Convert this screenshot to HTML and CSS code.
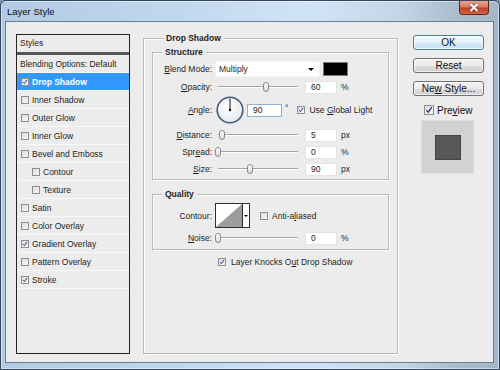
FILE: index.html
```html
<!DOCTYPE html>
<html lang="en">
<head>
    <meta charset="UTF-8">
    <title>Layer Style</title>
    <link rel="stylesheet" href="styles.css">
</head>
<body>
    <div class="window">
        <div class="titlebar">
            <span class="title">Layer Style</span>
            <span class="close">
                <svg width="12" height="9" viewBox="0 0 12 9"><path d="M2.5 1 L9.5 8 M9.5 1 L2.5 8" stroke="#fff" stroke-width="2" fill="none"/></svg>
            </span>
        </div>
        <div class="client">
            <div class="styles-panel">
                <div class="styles-head">Styles</div>
                <div class="style-row plain">Blending Options: Default</div>
                <div class="style-row selected"><span class="check on"><svg viewBox="0 0 8 8"><path d="M1.4 4.2 L3.2 6.2 L6.8 1.2" stroke="#21307a" stroke-width="1.3" fill="none"/></svg></span>Drop Shadow</div>
                <div class="style-row"><span class="check"></span>Inner Shadow</div>
                <div class="style-row"><span class="check"></span>Outer Glow</div>
                <div class="style-row"><span class="check"></span>Inner Glow</div>
                <div class="style-row"><span class="check"></span>Bevel and Emboss</div>
                <div class="style-row sub"><span class="check"></span>Contour</div>
                <div class="style-row sub"><span class="check"></span>Texture</div>
                <div class="style-row"><span class="check"></span>Satin</div>
                <div class="style-row"><span class="check"></span>Color Overlay</div>
                <div class="style-row"><span class="check on"><svg viewBox="0 0 8 8"><path d="M1.4 4.2 L3.2 6.2 L6.8 1.2" stroke="#21307a" stroke-width="1.3" fill="none"/></svg></span>Gradient Overlay</div>
                <div class="style-row"><span class="check"></span>Pattern Overlay</div>
                <div class="style-row"><span class="check on"><svg viewBox="0 0 8 8"><path d="M1.4 4.2 L3.2 6.2 L6.8 1.2" stroke="#21307a" stroke-width="1.3" fill="none"/></svg></span>Stroke</div>
            </div>

            <fieldset class="group main-group">
                <legend>Drop Shadow</legend>

                <fieldset class="group sub-group structure">
                    <legend>Structure</legend>
                    <div class="field-row blend-row">
                        <span class="field-label"><u>B</u>lend Mode:</span>
                        <div class="select"><span>Multiply</span><span class="arrow"></span></div>
                        <span class="swatch"></span>
                    </div>
                    <div class="field-row">
                        <span class="field-label"><u>O</u>pacity:</span>
                        <div class="slider"><div class="track"><span class="thumb" style="left: 60%"></span></div></div>
                        <span class="num">60</span>
                        <span class="unit">%</span>
                    </div>
                    <div class="field-row angle-row">
                        <span class="field-label"><u>A</u>ngle:</span>
                        <svg class="dial" width="28" height="28" viewBox="0 0 28 28">
                            <defs>
                                <radialGradient id="dialFill" cx="40%" cy="35%" r="70%">
                                    <stop offset="0" stop-color="#ffffff"/>
                                    <stop offset="1" stop-color="#e4e8ee"/>
                                </radialGradient>
                            </defs>
                            <circle cx="14" cy="14" r="12.8" fill="url(#dialFill)" stroke="#46587a" stroke-width="1.6"/>
                            <line x1="14" y1="14" x2="14" y2="2.5" stroke="#111" stroke-width="1"/>
                            <circle cx="14" cy="14" r="1.2" fill="#111"/>
                        </svg>
                        <span class="num angle-input">90</span>
                        <span class="degree">°</span>
                        <span class="check on global"><svg viewBox="0 0 8 8"><path d="M1.4 4.2 L3.2 6.2 L6.8 1.2" stroke="#21307a" stroke-width="1.3" fill="none"/></svg></span>
                        <span class="check-text">Use <u>G</u>lobal Light</span>
                    </div>
                    <div class="field-row distance-row">
                        <span class="field-label"><u>D</u>istance:</span>
                        <div class="slider"><div class="track"><span class="thumb" style="left: 5%"></span></div></div>
                        <span class="num">5</span>
                        <span class="unit">px</span>
                    </div>
                    <div class="field-row">
                        <span class="field-label">Spr<u>e</u>ad:</span>
                        <div class="slider"><div class="track"><span class="thumb" style="left: 0%"></span></div></div>
                        <span class="num">0</span>
                        <span class="unit">%</span>
                    </div>
                    <div class="field-row">
                        <span class="field-label"><u>S</u>ize:</span>
                        <div class="slider"><div class="track"><span class="thumb" style="left: 40%"></span></div></div>
                        <span class="num">90</span>
                        <span class="unit">px</span>
                    </div>
                </fieldset>

                <fieldset class="group sub-group quality">
                    <legend>Quality</legend>
                    <div class="field-row contour-row">
                        <span class="field-label">Contour:</span>
                        <div class="contour">
                            <svg width="26" height="23" viewBox="0 0 26 23"><polygon points="0,23 26,0 26,23" fill="#9c9c9c"/></svg>
                            <span class="contour-drop"><span class="arrow"></span></span>
                        </div>
                        <span class="check aa"></span>
                        <span class="check-text">Anti-a<u>l</u>iased</span>
                    </div>
                    <div class="field-row">
                        <span class="field-label"><u>N</u>oise:</span>
                        <div class="slider"><div class="track"><span class="thumb" style="left: 0%"></span></div></div>
                        <span class="num">0</span>
                        <span class="unit">%</span>
                    </div>
                </fieldset>

                <div class="knockout">
                    <span class="check on"><svg viewBox="0 0 8 8"><path d="M1.4 4.2 L3.2 6.2 L6.8 1.2" stroke="#21307a" stroke-width="1.3" fill="none"/></svg></span>
                    <span class="check-text">Layer Knocks O<u>u</u>t Drop Shadow</span>
                </div>
            </fieldset>

            <div class="buttons">
                <div class="btn default">OK</div>
                <div class="btn">Reset</div>
                <div class="btn">Ne<u>w</u> Style...</div>
                <div class="preview-row">
                    <span class="check on big"><svg viewBox="0 0 8 8"><path d="M1.4 4.2 L3.2 6.2 L6.8 1.2" stroke="#21307a" stroke-width="1.2" fill="none"/></svg></span>
                    <span>Pre<u>v</u>iew</span>
                </div>
                <div class="preview-box"><span class="preview-square"></span></div>
            </div>
        </div>
    </div>
</body>
</html>
```

FILE: styles.css
```css
* {
    box-sizing: border-box;
}
body {
    margin: 0;
    width: 500px;
    height: 370px;
    overflow: hidden;
    font-family: "Liberation Sans", Arial, sans-serif;
    font-size: 8.5px;
    color: #1e1e1e;
    background: #7f95a8;
}
u {
    text-decoration-thickness: 1px;
    text-underline-offset: 1px;
}

/* window frame */
.window {
    width: 500px;
    height: 370px;
    display: flex;
    flex-direction: column;
    border: 1px solid #34475a;
    border-radius: 6px 6px 0 0;
    padding: 0 5px 6px 4px;
    background: linear-gradient(90deg, #b3cae3 0%, #c1d7ee 35%, #cfe4f6 62%, #c3d6e8 80%, #a9bccd 92%, #a5b6c6 100%);
    box-shadow: inset 0 0 0 1px rgba(255, 255, 255, 0.45);
}
.titlebar {
    height: 20px;
    display: flex;
    justify-content: space-between;
    align-items: center;
}
.title {
    margin-left: 2px;
    font-size: 9.5px;
    color: #111;
}
.close {
    align-self: flex-start;
    width: 30px;
    height: 14px;
    margin-top: 0;
    margin-right: 5px;
    border: 1px solid #5b2b23;
    border-top: none;
    border-radius: 0 0 4px 4px;
    background: linear-gradient(#e8a491 0%, #d77c66 45%, #bf3f26 55%, #d5664a 100%);
    display: flex;
    align-items: center;
    justify-content: center;
}
.close svg {
    filter: drop-shadow(0 0 1px #5b2015);
}
.client {
    flex: 1;
    display: flex;
    border: 1px solid #6b7e91;
    background: #ececec;
    padding: 12px 9px 8px 10px;
}

/* checkboxes */
.check {
    flex: none;
    width: 8px;
    height: 8px;
    border: 1px solid #8e8f8f;
    background: linear-gradient(135deg, #dcdcdc, #f7f7f7);
    display: inline-flex;
}
.check svg {
    width: 100%;
    height: 100%;
}
.check.big {
    width: 10px;
    height: 10px;
}
.check-text {
    margin-left: 4px;
}

/* styles list */
.styles-panel {
    width: 114px;
    border: 1px solid #262626;
}
.styles-head {
    height: 20px;
    line-height: 17px;
    padding-left: 3px;
    border-bottom: 3px solid #565656;
}
.style-row {
    height: 18px;
    display: flex;
    align-items: center;
    padding-left: 4px;
    border-bottom: 1px solid #f8f8f8;
    gap: 3px;
}
.style-row.plain {
    padding-left: 3px;
}
.style-row.sub {
    padding-left: 15px;
}
.style-row.selected {
    background: #3399ff;
    color: #fff;
    font-weight: bold;
}

/* group boxes */
.group {
    margin: 0;
    padding: 0;
    min-width: 0;
    border: 1px solid #b8b8b8;
    box-shadow: inset 1px 1px 0 #fff, 1px 1px 0 #fff;
}
.group legend {
    font-weight: bold;
    line-height: 8px;
    padding: 0 3px;
    background: #ececec;
}
.main-group {
    width: 255px;
    margin-left: 13px;
    padding: 6px 8px 0 8px;
}
.main-group > legend {
    margin-left: 11px;
}
.sub-group > legend {
    margin-left: 9px;
}
.structure {
    padding: 5px 0 3px 0;
}
.quality {
    margin-top: 10px;
    padding: 5px 0 4px 0;
}

/* rows */
.field-row {
    display: flex;
    align-items: center;
    height: 14px;
    margin-top: 3px;
}
.field-label {
    width: 59px;
    margin-right: 3px;
    text-align: right;
    flex: none;
}
.blend-row {
    height: 16px;
    margin-top: 0;
}
.angle-row {
    height: 28px;
    margin-top: 2px;
}
.distance-row {
    margin-top: 4px;
}
.contour-row {
    height: 25px;
    margin-top: 0;
}
.select {
    width: 105px;
    height: 16px;
    background: #fff;
    border: 1px solid #f4f4f4;
    display: flex;
    align-items: center;
    justify-content: space-between;
    padding: 0 5px 0 3px;
}
.arrow {
    width: 0;
    height: 0;
    border-left: 3px solid transparent;
    border-right: 3px solid transparent;
    border-top: 3px solid #000;
}
.swatch {
    width: 25px;
    height: 14px;
    margin-left: 3px;
    background: #000;
    border: 1px solid #7a7a7a;
}
.slider {
    width: 84px;
    height: 14px;
    margin-left: 1px;
    padding: 0 2px;
    display: flex;
    align-items: center;
}
.track {
    position: relative;
    width: 100%;
    height: 2px;
    border-top: 1px solid #a3a3a3;
    border-bottom: 1px solid #fff;
}
.thumb {
    position: absolute;
    top: -5px;
    width: 6px;
    height: 10px;
    margin-left: -3px;
    border: 1px solid #8a8a8a;
    border-radius: 3px 3px 3px 3px;
    background: linear-gradient(#ffffff, #d9d9d9);
}
.num {
    width: 32px;
    height: 13px;
    margin-left: 5px;
    padding-left: 5px;
    line-height: 11px;
    background: #fff;
    border: 1px solid #e4e4e4;
}
.unit {
    margin-left: 4px;
}
.dial {
    margin-left: 1px;
    flex: none;
}
.angle-input {
    width: 35px;
    margin-left: 3px;
    border-color: #8fb2d8;
}
.degree {
    margin-left: 3px;
    align-self: flex-start;
    margin-top: 7px;
}
.check.global {
    margin-left: 9px;
}
.contour {
    width: 35px;
    height: 25px;
    display: flex;
    border: 1px solid #2e2e2e;
    background: #fff;
}
.contour svg {
    flex: none;
}
.contour-drop {
    flex: 1;
    border-left: 1px solid #2e2e2e;
    display: flex;
    align-items: center;
    justify-content: center;
}
.contour-drop .arrow {
    border-left-width: 2px;
    border-right-width: 2px;
    border-top-width: 2px;
}
.check.aa {
    margin-left: 10px;
}
.knockout {
    display: flex;
    align-items: center;
    height: 13px;
    margin-top: 5px;
    margin-left: 66px;
}
.knockout .check-text {
    margin-left: 5px;
}

/* buttons column */
.buttons {
    width: 71px;
    margin-left: 15px;
    display: flex;
    flex-direction: column;
    font-size: 10px;
    color: #111;
}
.btn {
    height: 15px;
    margin-top: 8px;
    border: 1px solid #707070;
    border-radius: 3px;
    text-align: center;
    line-height: 13px;
    background: linear-gradient(#f3f3f3 0%, #ebebeb 50%, #dddddd 51%, #d0d0d0 100%);
    box-shadow: inset 0 0 0 1px rgba(255, 255, 255, 0.7);
}
.btn.default {
    margin-top: 1px;
    border-color: #3c7fb1;
    background: linear-gradient(#f2f9fd 0%, #e6f3fb 50%, #d4ebf8 51%, #c6e2f4 100%);
}
.preview-row {
    display: flex;
    align-items: center;
    height: 10px;
    margin-top: 9px;
    padding-left: 11px;
    gap: 3px;
}
.preview-box {
    width: 53px;
    height: 54px;
    margin-top: 5px;
    margin-left: 8px;
    background: #d2d2d2;
    border: 1px solid #dedede;
    display: flex;
    align-items: center;
    justify-content: center;
}
.preview-square {
    width: 26px;
    height: 25px;
    background: #575757;
    border: 1px solid #444;
}
```
